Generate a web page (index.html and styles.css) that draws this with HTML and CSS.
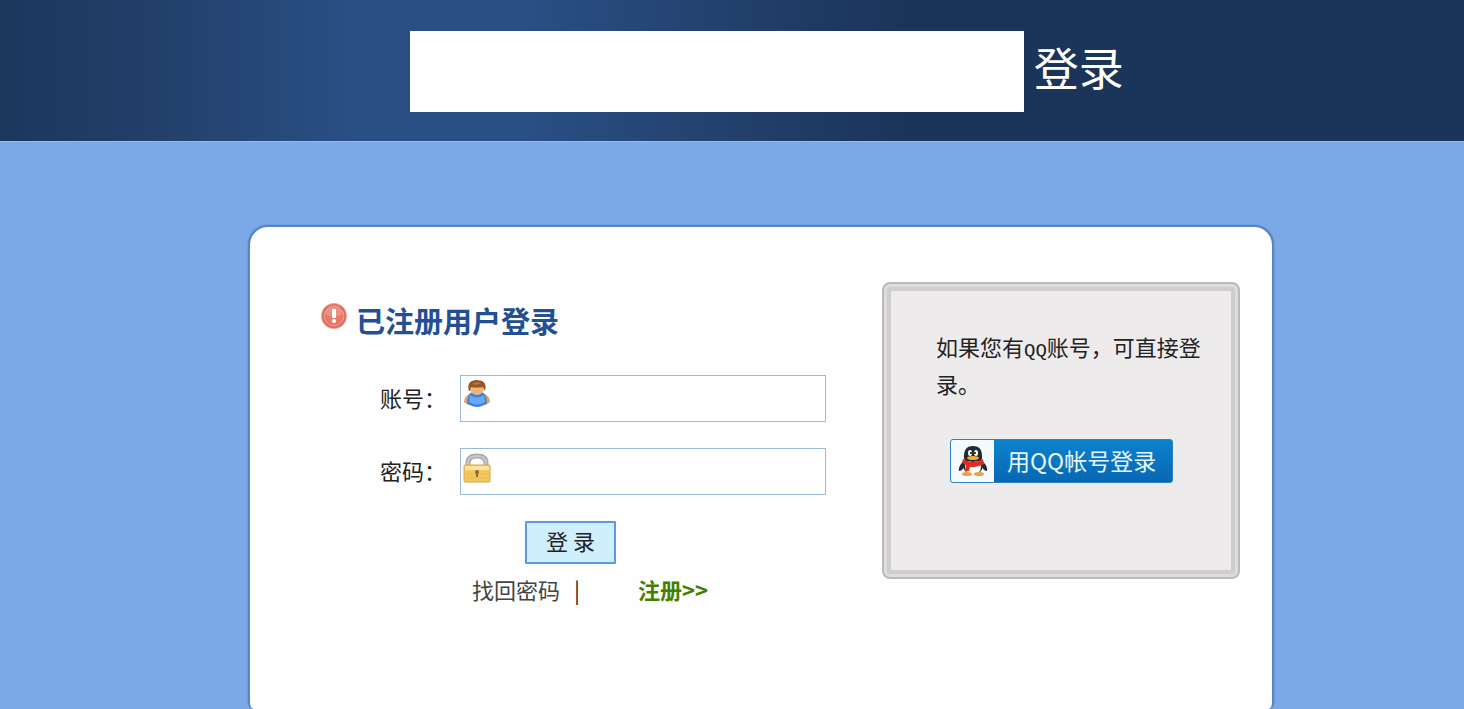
FILE: index.html
```html
<!DOCTYPE html>
<html lang="zh-CN">
<head>
    <meta charset="UTF-8">
    <meta name="viewport" content="width=device-width, initial-scale=1.0">
    <title>登录</title>
    <link rel="stylesheet" href="styles.css">
</head>
<body>
    <header class="header">
        <div class="banner"></div>
        <h1>登录</h1>
    </header>

    <main class="main">
        <div class="card">
            <!-- Login form -->
            <form class="login-form">
                <h2>
                    <svg class="alert-icon" viewBox="0 0 28 28" aria-hidden="true">
                        <circle cx="14" cy="14" r="13" fill="#eda699"/>
                        <circle cx="14" cy="14" r="12" fill="#d8695c"/>
                        <circle cx="14" cy="14" r="10" fill="#e5796b" stroke="#eea093" stroke-width="1"/>
                        <path d="M5 12a9 9 0 0 1 18 0q-9 5-18 0z" fill="#ec9184"/>
                        <path d="M12 7h4v9h-4z" fill="#fff"/>
                        <circle cx="14" cy="19" r="2" fill="#fff"/>
                    </svg>
                    已注册用户登录
                </h2>

                <div class="row">
                    <label for="account">账号：</label>
                    <div class="field">
                        <svg class="field-icon" viewBox="0 0 28 28" aria-hidden="true">
                            <path d="M1 22q0-6 7-9h12q7 3 7 9l-4 3H5z" fill="#dca467"/>
                            <path d="M4 23q0-8 5-11h10q5 3 5 11-10 8-20 0z" fill="#3f80df"/>
                            <path d="M7 15q7 5 14 0l1 7q-8 5-16 0z" fill="#68a8fa"/>
                            <ellipse cx="14" cy="8" rx="7" ry="7" fill="#ebb779"/>
                            <path d="M6 11Q3 1 13 0q12 0 9 11l-2-4q-6 1-12 0l-1 4z" fill="#945527"/>
                            <path d="M9 4q4-3 9-1-4 3-9 1z" fill="#b97a43"/>
                        </svg>
                        <input type="text" id="account" name="account">
                    </div>
                </div>

                <div class="row">
                    <label for="password">密码：</label>
                    <div class="field">
                        <svg class="field-icon lock-icon" viewBox="0 0 28 31" aria-hidden="true">
                            <path d="M5 14V10Q5 3 14 3q9 0 9 7v4" fill="none" stroke="#a9aaaf" stroke-width="5"/>
                            <path d="M5 14V10Q5 3 14 3q9 0 9 7v4" fill="none" stroke="#c7c8cc" stroke-width="2"/>
                            <rect x="1" y="12" width="26" height="17" rx="1" fill="#f3c85e" stroke="#dca544"/>
                            <path d="M2 13h24v4H2z" fill="#fce49a"/>
                            <path d="M3 21h22M3 25h22" stroke="#ecba52"/>
                            <circle cx="14" cy="19" r="2" fill="#8b6834"/>
                            <path d="M13 20h2v4h-2z" fill="#8b6834"/>
                        </svg>
                        <input type="password" id="password" name="password">
                    </div>
                </div>

                <button type="button" class="login-btn">登 录</button>

                <div class="links">
                    <a href="#">找回密码</a>
                    <span class="divider">|</span>
                    <a href="#" class="register">注册&gt;&gt;</a>
                </div>
            </form>

            <!-- QQ login -->
            <aside class="qq-panel">
                <p>如果您有<span class="latin">QQ</span>账号，可直接登录。</p>
                <button type="button" class="qq-btn">
                    <span class="qq-logo">
                        <svg viewBox="0 0 30 32" aria-hidden="true">
                            <path d="M6 16q-6 5-5 10 3 0 5-4zM24 16q6 5 5 10-3 0-5-4z" fill="#232a34"/>
                            <ellipse cx="15" cy="20" rx="10" ry="10" fill="#232a34"/>
                            <ellipse cx="15" cy="22" rx="8" ry="8" fill="#fff"/>
                            <path d="M6 14Q5 1 15 1t9 13q-9 6-18 0z" fill="#232a34"/>
                            <ellipse cx="12" cy="8" rx="2" ry="3" fill="#fff"/>
                            <ellipse cx="18" cy="8" rx="2" ry="3" fill="#fff"/>
                            <circle cx="13" cy="8" r="1" fill="#111"/>
                            <circle cx="17" cy="8" r="1" fill="#111"/>
                            <ellipse cx="15" cy="13" rx="6" ry="2" fill="#f4ae2c"/>
                            <path d="M5 14q10 6 20 0l1 5q-7 4-14 3l-1 4H7l1-6-4-2z" fill="#dd2c22"/>
                            <ellipse cx="9" cy="29" rx="5" ry="2" fill="#eba33b"/>
                            <ellipse cx="21" cy="29" rx="5" ry="2" fill="#eba33b"/>
                        </svg>
                    </span>
                    <span class="qq-text">用QQ帐号登录</span>
                </button>
            </aside>
        </div>
    </main>
</body>
</html>
```

FILE: styles.css
```css
* {
    box-sizing: border-box;
}
body {
    margin: 0;
    min-height: 100vh;
    display: flex;
    flex-direction: column;
    background: #7ba9e8;
    color: #222;
    font-family: "Noto Sans CJK SC", sans-serif;
    font-size: 22px;
}
.header {
    display: flex;
    align-items: flex-start;
    justify-content: center;
    gap: 10px;
    padding: 31px 0 29px 70px;
    background: linear-gradient(90deg, #1c375c 0%, #213f69 10%, #2a4f84 24%, #2a4f84 36%, #1b3459 62%, #1b3459 100%);
}
.banner {
    width: 44%;
    height: 81px;
    background: #fff;
}
.header h1 {
    margin: 0;
    color: #fff;
    font-size: 45px;
    font-weight: 400;
    line-height: 72px;
}
.main {
    flex: 1;
    display: flex;
    justify-content: center;
    padding: 83px 0 0 58px;
    border-top: 1px solid #98bbea;
}
.card {
    display: flex;
    align-items: flex-start;
    justify-content: space-between;
    width: 1026px;
    padding: 55px 32px 40px 70px;
    background: #fefefe;
    border: 2px solid #5585c5;
    border-bottom: 0;
    border-radius: 20px 20px 6px 6px;
    box-shadow: 0 0 2px #5585c5;
}

/* Login form */
.login-form {
    width: 506px;
    padding-top: 16px;
}
.login-form h2 {
    display: flex;
    align-items: flex-start;
    gap: 8px;
    margin: 0 0 33px;
    color: #234f95;
    font-size: 29px;
    font-weight: 700;
    line-height: 44px;
}
.alert-icon {
    width: 28px;
    height: 28px;
    margin-top: 4px;
}
.row {
    display: flex;
    align-items: center;
    gap: 14px;
    margin-bottom: 26px;
    padding-left: 60px;
}
.row label {
    flex: none;
    padding-bottom: 4px;
    line-height: 32px;
}
.field {
    display: flex;
    flex: 1;
    height: 47px;
    padding: 4px 2px;
    background: #fff;
    border: 1px solid #9cb9e0;
}
.field-icon {
    flex: none;
    width: 28px;
    height: 28px;
}
.lock-icon {
    height: 31px;
}
.field input {
    flex: 1;
    min-width: 0;
    padding: 0 8px;
    background: none;
    border: 0;
    outline: none;
    font: inherit;
}
.login-btn {
    display: block;
    height: 43px;
    margin-left: 205px;
    padding: 0 19px 6px;
    background: #d0effd;
    border: 2px solid #5a9bdb;
    border-radius: 1px;
    color: #222;
    font: inherit;
    cursor: pointer;
}
.links {
    display: flex;
    align-items: center;
    margin-top: 9px;
    padding-left: 152px;
    line-height: 32px;
}
.links a {
    color: #444;
    text-decoration: none;
}
.divider {
    margin: 0 58px 0 14px;
}
.links .register {
    color: #438000;
    font-weight: 700;
}

/* QQ login panel */
.qq-panel {
    width: 358px;
    height: 297px;
    padding: 44px 28px 0 52px;
    background: #edebec;
    border: 2px solid #bbb9ba;
    border-radius: 8px;
    box-shadow: inset 0 0 0 3px #dedcdd, inset 0 0 0 7px #cfcdce;
}
.qq-panel p {
    margin: 0 0 37px;
    line-height: 37px;
}
.latin {
    font-family: "Liberation Mono", monospace;
    font-size: 19px;
    line-height: 1;
}
.qq-btn {
    display: flex;
    height: 44px;
    margin-left: 14px;
    padding: 0;
    overflow: hidden;
    background: linear-gradient(#0c82cd, #0867b3);
    border: 1px solid #2b81be;
    border-radius: 3px;
    color: #e6f6ff;
    font: inherit;
    cursor: pointer;
}
.qq-logo {
    display: flex;
    align-items: center;
    justify-content: center;
    width: 43px;
    height: 42px;
    background: #f4fafe;
}
.qq-logo svg {
    width: 30px;
    height: 32px;
}
.qq-text {
    padding: 0 16px 0 13px;
    font-size: 23px;
    line-height: 40px;
}
```
